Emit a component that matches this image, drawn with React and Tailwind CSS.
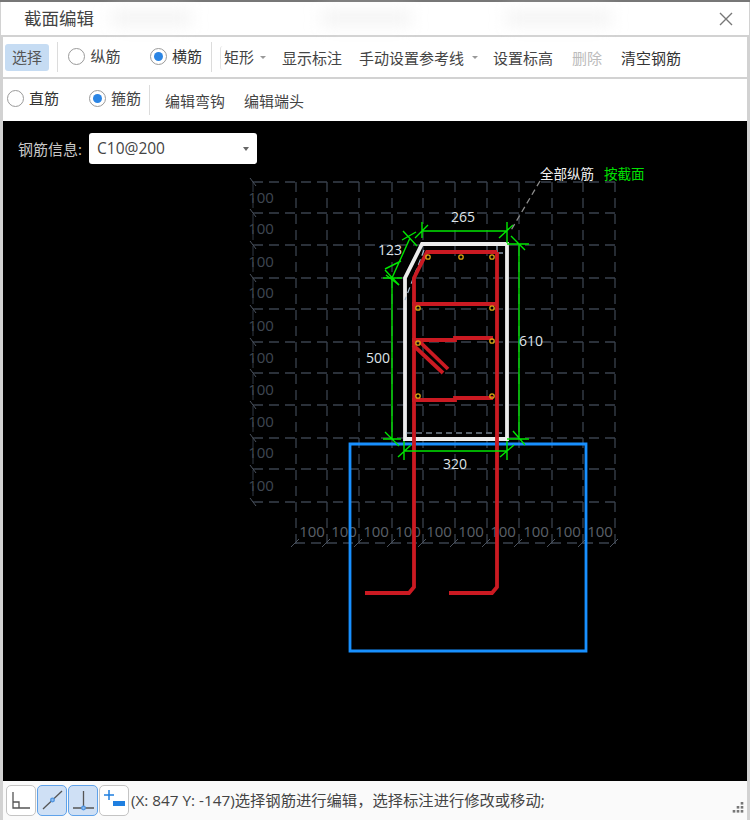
const FONT = { fontFamily: '"Open Sans","Noto Sans CJK SC",sans-serif' };
const H = [182, 213, 245, 278, 309, 342, 373, 405, 438, 469, 502];
const V = [296, 327, 359, 392, 423, 455, 487, 519, 552, 583, 615];
const LY = [198, 229, 262, 293, 326, 358, 390, 422, 453, 486];
const BX = [312, 344, 376, 408, 439, 471, 503, 536, 568, 600];
const DOTS = [[428,257],[461,257],[492,257],[492,308],[492,341],[492,396],[418,308],[418,343],[418,396]];

function Radio({ on }) {
  return (
    <span className="w-[17px] h-[17px] rounded-full border border-[#9a9a9a] bg-white flex items-center justify-center shrink-0">
      {on ? <span className="w-[9px] h-[9px] rounded-full bg-[#2b85e4]" /> : null}
    </span>
  );
}
function Sep() {
  return <span className="block w-px h-[30px] bg-[#dcdcdc] shrink-0" />;
}
function Caret({ className }) {
  return <span className={"w-0 h-0 border-x-[3px] border-x-transparent border-t-[3px] border-t-[#999] " + (className || "")} />;
}

function Drawing() {
  return (
    <svg className="absolute inset-0" width="744" height="660" viewBox="3 121 744 660">
      <g stroke="#3a424e" strokeWidth="1.3" strokeDasharray="10 6" fill="none">
        {H.map((y) => <line key={y} x1="253" y1={y} x2="616" y2={y} />)}
        <line x1="253" y1="182" x2="253" y2="502" stroke="#262c35" />
        <line x1="295" y1="543" x2="616" y2="543" />
        {V.map((x) => <line key={x} x1={x} y1="182" x2={x} y2="546" />)}
      </g>
      <g stroke="#4a525e" strokeWidth="1" fill="none">
        {H.map((y) => <line key={y} x1="250" y1={y - 4} x2="256" y2={y + 4} />)}
        {V.map((x) => <line key={x} x1={x - 5} y1="547" x2={x + 3} y2="539" />)}
      </g>
      <g fill="#3f4752" fontSize="15" textAnchor="middle" style={FONT}>
        {LY.map((y) => <text key={y} x="261" y={y + 4.5}>100</text>)}
      </g>
      <g fill="#5b6069" fontSize="15" textAnchor="middle" style={FONT}>
        {BX.map((x) => <text key={x} x={x} y="537">100</text>)}
      </g>

      <path d="M350 444H586V651H350Z" fill="none" stroke="#1890ff" strokeWidth="2.8" />
      <path d="M422 244H507V439H405V278Z" fill="none" stroke="#ececec" strokeWidth="3.8" />

      <g stroke="#a9bdd2" strokeWidth="1.2" strokeDasharray="6 4" fill="none">
        <line x1="406" y1="433" x2="506" y2="433" />
        <line x1="497" y1="246" x2="497" y2="253" />
        <line x1="497" y1="253" x2="507" y2="253" />
        <line x1="424" y1="250" x2="405" y2="300" />
      </g>

      <g stroke="#cb1a22" strokeWidth="3.8" fill="none">
        <path d="M497 252H427L414 278V587L409 593H365" />
        <path d="M497 252V587L492 593H449" />
        <line x1="412" y1="304" x2="497" y2="304" />
        <path d="M412 340H455V338H493" />
        <path d="M412 400H455V398H493" />
        <line x1="420" y1="342" x2="448" y2="369" />
        <line x1="413" y1="345" x2="443" y2="373" />
      </g>
      <g fill="none" stroke="#d9a514" strokeWidth="1.3">
        {DOTS.map(([x, y]) => <circle key={x + "-" + y} cx={x} cy={y} r="2.2" />)}
      </g>

      <g stroke="#00e600" strokeWidth="1.4" fill="none">
        <path d="M422 231H507M422 222V238M507 222V243M499 238L513 225M415 238L428 225" />
        <path d="M507 244H529M519 244V439M511 236L525 250M507 439H529M513 431L525 445" />
        <path d="M392 278V439M383 278H402M385 270L399 285M383 439H401M385 432L399 446" />
        <path d="M404 451H507M404 441V460M398 457L411 445M507 441V460M500 457L514 445" />
        <path d="M392 278L410 238M385 269L401 261M403 231L417 246M386 275L399 285M402 240L416 232" />
      </g>

      <line x1="540" y1="181" x2="510" y2="232" stroke="#8c8c8c" strokeWidth="1.3" strokeDasharray="6 4" />

      <g fontSize="14" fill="#dfe3e8" textAnchor="middle" style={FONT}>
        <text x="463" y="222">265</text>
        <text x="390" y="255">123</text>
        <text x="378" y="363">500</text>
        <text x="531" y="346">610</text>
        <text x="455" y="469">320</text>
      </g>
      <text x="540" y="179" fontSize="13.5" fill="#f0f0f0" style={FONT}>全部纵筋</text>
      <text x="604" y="179" fontSize="13.5" fill="#00e000" style={FONT}>按截面</text>
    </svg>
  );
}

function ToolBtn({ active, children }) {
  return (
    <span
      className={
        "w-[30px] h-[31px] rounded-[5px] border-[1.5px] flex items-center justify-center shrink-0 " +
        (active ? "bg-[#cfe0f5] border-[#5fa2ea]" : "bg-white border-[#c4c4c4]")
      }
    >
      {children}
    </span>
  );
}

export default function App() {
  return (
    <div className="w-[750px] h-[820px] overflow-hidden bg-[#d2d2d2] flex flex-col relative text-[15px] text-[#444]" style={FONT}>
      <div className="h-[2px] bg-[#777] shrink-0" />
      <div className="h-[33px] mx-px bg-white shrink-0 flex items-center pl-[23px] pr-[16px] justify-between relative">
        <span className="text-[17.5px] leading-none text-[#444]">截面编辑</span>
        <span className="absolute left-[110px] top-[10px] w-[80px] h-[12px] bg-[#f1f1f1] blur-sm" />
        <span className="absolute left-[320px] top-[10px] w-[90px] h-[12px] bg-[#f1f1f1] blur-sm" />
        <span className="absolute left-[505px] top-[10px] w-[105px] h-[12px] bg-[#f1f1f1] blur-sm" />
        <svg width="14" height="14" viewBox="0 0 14 14" fill="none" stroke="#777" strokeWidth="1.4">
          <path d="M1 1L13 13M13 1L1 13" />
        </svg>
      </div>

      <div className="h-[40px] mt-[2px] mx-[3px] bg-white shrink-0 flex items-center">
        <span className="ml-[2px] w-[44px] h-[27px] bg-[#c6dcf3] rounded-[3px] flex items-center justify-center text-[#555] mt-[1px]">选择</span>
        <span className="ml-[8px]"><Sep /></span>
        <span className="ml-[10px] flex items-center gap-[5.5px] -mt-[1px]"><Radio /><span>纵筋</span></span>
        <span className="ml-[29px] flex items-center gap-[5.5px] -mt-[1px]"><Radio on /><span className="text-[#333]">横筋</span></span>
        <span className="ml-[9px]"><Sep /></span>
        <span className="ml-[8px] pl-[3px] w-[36px] h-[24px] border-l border-[#e4e4e4] rounded-l-[3px] flex items-center mt-[1px]">矩形</span>
        <Caret className="ml-[4px] mt-[1px]" />
        <span className="ml-[16px] mt-[2px]">显示标注</span>
        <span className="ml-[17px] mt-[2px]">手动设置参考线</span>
        <Caret className="ml-[8px] mt-[1px]" />
        <span className="ml-[15px] mt-[2px]">设置标高</span>
        <span className="ml-[19px] mt-[2px] text-[#bbb]">删除</span>
        <span className="ml-[19px] mt-[2px] text-[#333]">清空钢筋</span>
      </div>

      <div className="h-[42px] mt-[2px] mx-[3px] bg-white shrink-0 flex items-center">
        <span className="ml-[4px] flex items-center gap-[5px] -mt-[3px]"><Radio /><span className="text-[#333]">直筋</span></span>
        <span className="ml-[30px] flex items-center gap-[5px] -mt-[3px]"><Radio on /><span>箍筋</span></span>
        <span className="ml-[8px]"><Sep /></span>
        <span className="ml-[15px] mt-[2px]">编辑弯钩</span>
        <span className="ml-[19px] mt-[2px]">编辑端头</span>
      </div>

      <div className="h-[660px] mx-[3px] bg-black shrink-0 relative">
        <Drawing />
        <div className="relative flex items-center pt-[12px] pl-[15px]">
          <span className="text-[#c8c8c8] w-[71px] mt-[1px]">钢筋信息:</span>
          <div className="w-[168px] h-[31px] bg-white rounded-[3px] flex items-center justify-between pl-[8px] pr-[8px] text-[#444] text-[15.5px]">
            <span>C10@200</span>
            <span className="w-0 h-0 border-x-[3.5px] border-x-transparent border-t-[4px] border-t-[#666]" />
          </div>
        </div>
      </div>

      <div className="flex-1 mx-[3px] bg-[#fafafa] flex items-center pl-[3px] gap-px relative text-[15.3px] pb-[1px]">
        <ToolBtn>
          <svg width="24" height="24" viewBox="0 0 24 24" fill="none" stroke="#555" strokeWidth="1.3">
            <path d="M4 4V20H21M4 14H10V20" />
          </svg>
        </ToolBtn>
        <ToolBtn active>
          <svg width="24" height="24" viewBox="0 0 24 24" fill="none" stroke="#555" strokeWidth="1.3">
            <path d="M3 21L22 3" />
            <circle cx="12.5" cy="12" r="1.8" fill="#8fbdf0" stroke="#4f94e0" />
          </svg>
        </ToolBtn>
        <ToolBtn active>
          <svg width="24" height="24" viewBox="0 0 24 24" fill="none" stroke="#555" strokeWidth="1.3">
            <path d="M2 20H23M12.5 3V20" />
            <circle cx="12.5" cy="20" r="1.8" fill="#8fbdf0" stroke="#4f94e0" />
          </svg>
        </ToolBtn>
        <ToolBtn>
          <svg width="24" height="24" viewBox="0 0 24 24" fill="none">
            <path d="M7 2V12M2 7H12" stroke="#1f7fe0" strokeWidth="1.5" />
            <rect x="11" y="13" width="12" height="5" fill="#1f7fe0" />
          </svg>
        </ToolBtn>
        <span className="ml-px whitespace-nowrap">(X: 847 Y: -147)选择钢筋进行编辑，选择标注进行修改或移动;</span>
        <svg className="absolute right-[3px] bottom-[6px]" width="12" height="12" viewBox="0 0 12 12" fill="#777">
          <rect x="8.7" y="0" width="2.6" height="2.6" />
          <rect x="4.7" y="4" width="2.6" height="2.6" />
          <rect x="8.7" y="4" width="2.6" height="2.6" />
          <rect x="0.7" y="8" width="2.6" height="2.6" />
          <rect x="4.7" y="8" width="2.6" height="2.6" />
          <rect x="8.7" y="8" width="2.6" height="2.6" />
        </svg>
      </div>
    </div>
  );
}
